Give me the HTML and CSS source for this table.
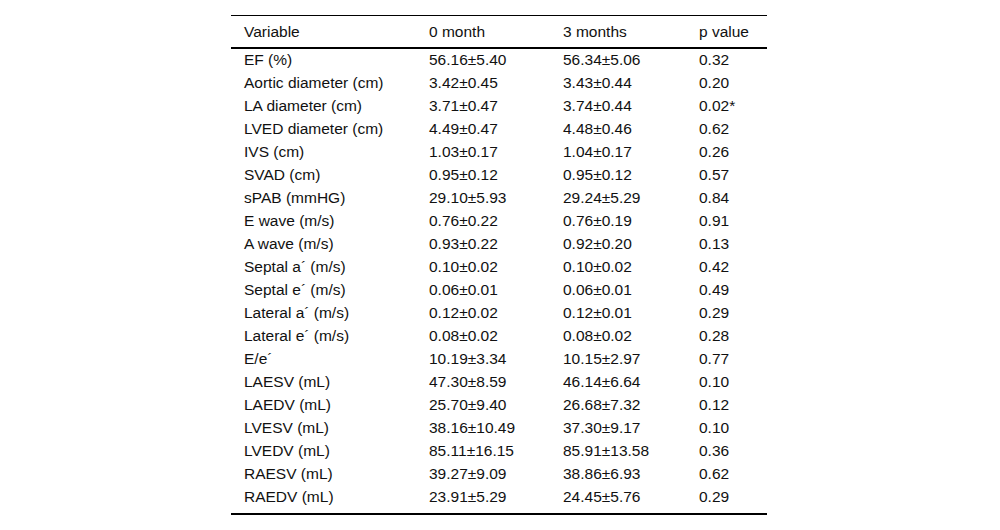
FILE: index.html
```html
<!DOCTYPE html>
<html>
<head>
<meta charset="utf-8">
<link rel="stylesheet" href="styles.css">
</head>
<body>
<div class="wrap">
<table class="data">
<colgroup><col class="c1"><col class="c2"><col class="c3"><col class="c4"></colgroup>
<thead>
<tr><th>Variable</th><th>0 month</th><th>3 months</th><th>p value</th></tr>
</thead>
<tbody>
<tr><td>EF (%)</td><td>56.16±5.40</td><td>56.34±5.06</td><td>0.32</td></tr>
<tr><td>Aortic diameter (cm)</td><td>3.42±0.45</td><td>3.43±0.44</td><td>0.20</td></tr>
<tr><td>LA diameter (cm)</td><td>3.71±0.47</td><td>3.74±0.44</td><td>0.02*</td></tr>
<tr><td>LVED diameter (cm)</td><td>4.49±0.47</td><td>4.48±0.46</td><td>0.62</td></tr>
<tr><td>IVS (cm)</td><td>1.03±0.17</td><td>1.04±0.17</td><td>0.26</td></tr>
<tr><td>SVAD (cm)</td><td>0.95±0.12</td><td>0.95±0.12</td><td>0.57</td></tr>
<tr><td>sPAB (mmHG)</td><td>29.10±5.93</td><td>29.24±5.29</td><td>0.84</td></tr>
<tr><td>E wave (m/s)</td><td>0.76±0.22</td><td>0.76±0.19</td><td>0.91</td></tr>
<tr><td>A wave (m/s)</td><td>0.93±0.22</td><td>0.92±0.20</td><td>0.13</td></tr>
<tr><td>Septal a´ (m/s)</td><td>0.10±0.02</td><td>0.10±0.02</td><td>0.42</td></tr>
<tr><td>Septal e´ (m/s)</td><td>0.06±0.01</td><td>0.06±0.01</td><td>0.49</td></tr>
<tr><td>Lateral a´ (m/s)</td><td>0.12±0.02</td><td>0.12±0.01</td><td>0.29</td></tr>
<tr><td>Lateral e´ (m/s)</td><td>0.08±0.02</td><td>0.08±0.02</td><td>0.28</td></tr>
<tr><td>E/e´</td><td>10.19±3.34</td><td>10.15±2.97</td><td>0.77</td></tr>
<tr><td>LAESV (mL)</td><td>47.30±8.59</td><td>46.14±6.64</td><td>0.10</td></tr>
<tr><td>LAEDV (mL)</td><td>25.70±9.40</td><td>26.68±7.32</td><td>0.12</td></tr>
<tr><td>LVESV (mL)</td><td>38.16±10.49</td><td>37.30±9.17</td><td>0.10</td></tr>
<tr><td>LVEDV (mL)</td><td>85.11±16.15</td><td>85.91±13.58</td><td>0.36</td></tr>
<tr><td>RAESV (mL)</td><td>39.27±9.09</td><td>38.86±6.93</td><td>0.62</td></tr>
<tr><td>RAEDV (mL)</td><td>23.91±5.29</td><td>24.45±5.76</td><td>0.29</td></tr>
</tbody>
</table>
</div>
</body>
</html>
```
FILE: styles.css
```css
html, body {
  margin: 0;
  padding: 0;
  background: #fff;
}
body {
  font-family: "Liberation Sans", Arial, sans-serif;
  font-size: 15.5px;
  color: #111;
}
.wrap {
  padding-top: 15px;
  padding-left: 231px;
}
.data {
  border-collapse: collapse;
  table-layout: fixed;
  width: 536px;
  border-top: 1px solid #000;
  border-bottom: 2px solid #000;
}
.c1 { width: 185px; }
.c2 { width: 134px; }
.c3 { width: 136px; }
.c4 { width: 81px; }
.data th {
  font-weight: normal;
  text-align: left;
  padding: 0 13px;
  height: 31px;
  line-height: 31px;
  border-bottom: 2px solid #000;
}
.data td {
  text-align: left;
  padding: 0 13px 1px;
  height: 22px;
  line-height: 22px;
  white-space: nowrap;
}
.data tbody tr:last-child td {
  padding-bottom: 5px;
}
```
